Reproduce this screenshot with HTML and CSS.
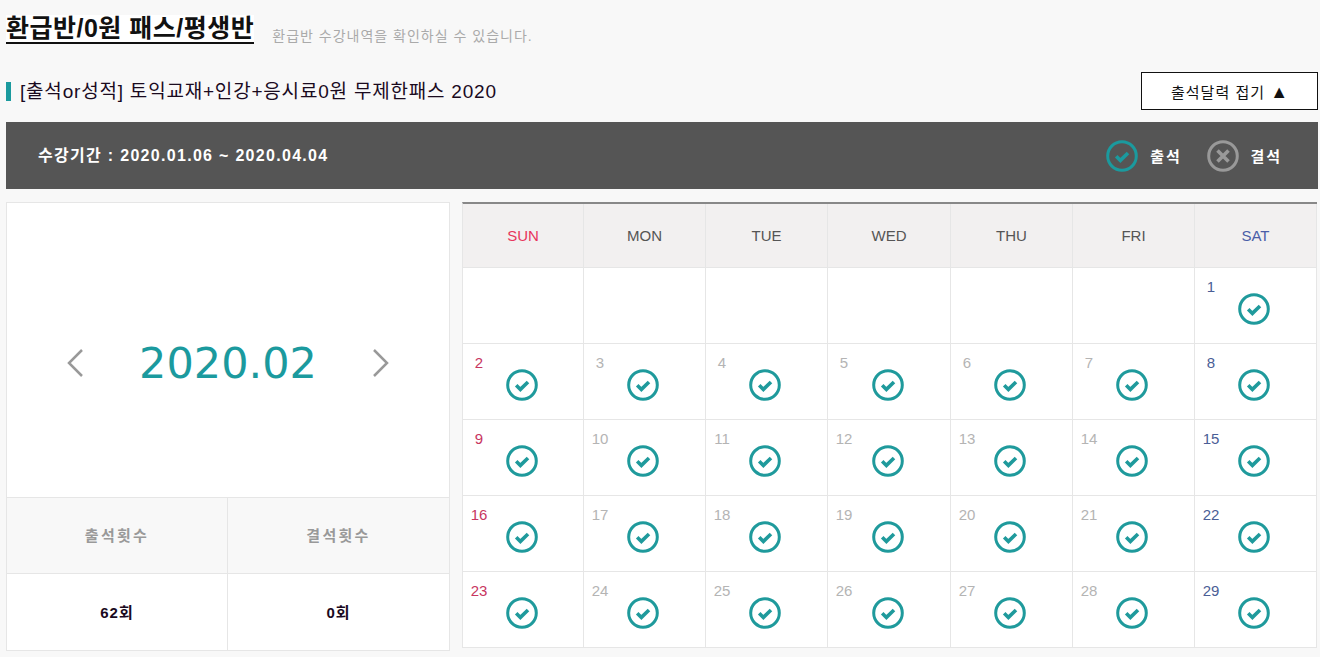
FILE: index.html
```html
<!DOCTYPE html>
<html lang="ko">
<head>
    <meta charset="UTF-8">
    <meta name="viewport" content="width=device-width, initial-scale=1.0">
    <title>환급반/0원 패스/평생반</title>
    <link rel="stylesheet" href="styles.css">
</head>
<body>
    <svg class="icon-defs" width="0" height="0">
        <symbol id="check" viewBox="0 0 32 32">
            <circle cx="16" cy="16" r="14.3" fill="none" stroke="currentColor" stroke-width="3"/>
            <path d="M10.2 16.2l4.2 4.2 7.6-7.4" fill="none" stroke="currentColor" stroke-width="3.6"/>
        </symbol>
        <symbol id="cross" viewBox="0 0 32 32">
            <circle cx="16" cy="16" r="14.3" fill="none" stroke="currentColor" stroke-width="3"/>
            <path d="M10.5 10.5l11 11M21.5 10.5l-11 11" fill="none" stroke="currentColor" stroke-width="3.6"/>
        </symbol>
    </svg>

    <div class="page-head">
        <h2>환급반/0원 패스/평생반</h2>
        <span class="page-desc">환급반 수강내역을 확인하실 수 있습니다.</span>
    </div>

    <div class="course-head">
        <h3>[출석or성적] 토익교재+인강+응시료0원 무제한패스 2020</h3>
        <button type="button" class="toggle-btn">출석달력 접기 <span class="caret">▲</span></button>
    </div>

    <div class="period-bar">
        <span>수강기간 : 2020.01.06 ~ 2020.04.04</span>
        <ul class="legend">
            <li><svg class="legend-icon teal"><use href="#check"/></svg>출석</li>
            <li><svg class="legend-icon gray"><use href="#cross"/></svg>결석</li>
        </ul>
    </div>

    <div class="attend-wrap">
        <div class="month-panel">
            <div class="month-nav">
                <svg class="arrow" viewBox="0 0 18 30"><path d="M16 2L3 15l13 13"/></svg>
                <span class="month">2020.02</span>
                <svg class="arrow" viewBox="0 0 18 30"><path d="M2 2l13 13L2 28"/></svg>
            </div>
            <div class="stats">
                <div class="stat-label">출석횟수</div>
                <div class="stat-label">결석횟수</div>
                <div class="stat-value">62회</div>
                <div class="stat-value">0회</div>
            </div>
        </div>

        <div class="calendar">
            <div class="dow sun">SUN</div>
            <div class="dow">MON</div>
            <div class="dow">TUE</div>
            <div class="dow">WED</div>
            <div class="dow">THU</div>
            <div class="dow">FRI</div>
            <div class="dow sat">SAT</div>

            <div class="day"></div>
            <div class="day"></div>
            <div class="day"></div>
            <div class="day"></div>
            <div class="day"></div>
            <div class="day"></div>
            <div class="day sat"><span class="num">1</span><svg class="mark"><use href="#check"/></svg></div>

            <div class="day sun"><span class="num">2</span><svg class="mark"><use href="#check"/></svg></div>
            <div class="day"><span class="num">3</span><svg class="mark"><use href="#check"/></svg></div>
            <div class="day"><span class="num">4</span><svg class="mark"><use href="#check"/></svg></div>
            <div class="day"><span class="num">5</span><svg class="mark"><use href="#check"/></svg></div>
            <div class="day"><span class="num">6</span><svg class="mark"><use href="#check"/></svg></div>
            <div class="day"><span class="num">7</span><svg class="mark"><use href="#check"/></svg></div>
            <div class="day sat"><span class="num">8</span><svg class="mark"><use href="#check"/></svg></div>

            <div class="day sun"><span class="num">9</span><svg class="mark"><use href="#check"/></svg></div>
            <div class="day"><span class="num">10</span><svg class="mark"><use href="#check"/></svg></div>
            <div class="day"><span class="num">11</span><svg class="mark"><use href="#check"/></svg></div>
            <div class="day"><span class="num">12</span><svg class="mark"><use href="#check"/></svg></div>
            <div class="day"><span class="num">13</span><svg class="mark"><use href="#check"/></svg></div>
            <div class="day"><span class="num">14</span><svg class="mark"><use href="#check"/></svg></div>
            <div class="day sat"><span class="num">15</span><svg class="mark"><use href="#check"/></svg></div>

            <div class="day sun"><span class="num">16</span><svg class="mark"><use href="#check"/></svg></div>
            <div class="day"><span class="num">17</span><svg class="mark"><use href="#check"/></svg></div>
            <div class="day"><span class="num">18</span><svg class="mark"><use href="#check"/></svg></div>
            <div class="day"><span class="num">19</span><svg class="mark"><use href="#check"/></svg></div>
            <div class="day"><span class="num">20</span><svg class="mark"><use href="#check"/></svg></div>
            <div class="day"><span class="num">21</span><svg class="mark"><use href="#check"/></svg></div>
            <div class="day sat"><span class="num">22</span><svg class="mark"><use href="#check"/></svg></div>

            <div class="day sun"><span class="num">23</span><svg class="mark"><use href="#check"/></svg></div>
            <div class="day"><span class="num">24</span><svg class="mark"><use href="#check"/></svg></div>
            <div class="day"><span class="num">25</span><svg class="mark"><use href="#check"/></svg></div>
            <div class="day"><span class="num">26</span><svg class="mark"><use href="#check"/></svg></div>
            <div class="day"><span class="num">27</span><svg class="mark"><use href="#check"/></svg></div>
            <div class="day"><span class="num">28</span><svg class="mark"><use href="#check"/></svg></div>
            <div class="day sat"><span class="num">29</span><svg class="mark"><use href="#check"/></svg></div>
        </div>
    </div>
</body>
</html>
```

FILE: styles.css
```css
html, body {
    height: 657px;
    overflow: hidden;
}
body {
    font-family: "Liberation Sans", "Noto Sans CJK KR", sans-serif;
    background-color: #f8f8f8;
    color: #1a0a1e;
    margin: 0;
    padding: 15px 2px 0 6px;
}
.icon-defs {
    display: block;
    height: 0;
}

/* page heading */
.page-head {
    display: flex;
    align-items: flex-end;
    height: 29px;
}
h2 {
    margin: 0;
    height: 27px;
    font-size: 25px;
    line-height: 26px;
    font-weight: 700;
    letter-spacing: 0.5px;
    color: #111;
    background: #fff;
    border-bottom: 2px solid #111;
}
.page-desc {
    margin-left: 18px;
    font-size: 14px;
    line-height: 15px;
    letter-spacing: 1px;
    color: #aaa;
}

/* course title + toggle */
.course-head {
    display: flex;
    justify-content: space-between;
    align-items: center;
    height: 38px;
    margin-top: 28px;
}
h3 {
    margin: 0;
    padding-left: 9px;
    border-left: 5px solid #1b9a9e;
    font-size: 19px;
    line-height: 19px;
    font-weight: 400;
    letter-spacing: 0.8px;
}
.toggle-btn {
    width: 177px;
    height: 38px;
    padding: 0;
    background: #fff;
    border: 1px solid #111;
    font-family: inherit;
    font-size: 15px;
    letter-spacing: 1px;
    color: #111;
}
.caret {
    font-size: 18px;
    line-height: 14px;
    letter-spacing: 0;
}

/* dark period bar */
.period-bar {
    display: flex;
    justify-content: space-between;
    align-items: center;
    box-sizing: border-box;
    height: 67px;
    margin-top: 12px;
    padding: 0 36px 3px 32px;
    background-color: #555;
    color: #fff;
    font-size: 16px;
    font-weight: 700;
    letter-spacing: 1.3px;
}
.legend {
    display: flex;
    gap: 25px;
    margin: 3px 0 0;
    padding: 0;
    list-style: none;
    font-size: 15px;
    letter-spacing: 1.9px;
}
.legend li {
    display: flex;
    align-items: center;
    gap: 12px;
}
.legend-icon {
    width: 32px;
    height: 32px;
}
.teal { color: #1b9a9e; }
.gray { color: #999; }

/* attendance area */
.attend-wrap {
    display: flex;
    align-items: flex-start;
    gap: 12px;
    margin-top: 13px;
}
.month-panel {
    width: 444px;
    height: 449px;
    box-sizing: border-box;
    background: #fff;
    border: 1px solid #e6e6e6;
    display: flex;
    flex-direction: column;
}
.month-nav {
    flex: 1;
    display: flex;
    justify-content: center;
    align-items: center;
    gap: 55px;
    padding-top: 26px;
}
.month {
    font-family: "DejaVu Sans", sans-serif;
    font-size: 43px;
    color: #1b9a9e;
}
.arrow {
    width: 18px;
    height: 30px;
    fill: none;
    stroke: #999;
    stroke-width: 2.5;
}
.stats {
    display: grid;
    grid-template-columns: 221px 1fr;
    grid-template-rows: 76px 77px;
    text-align: center;
}
.stat-label, .stat-value {
    display: flex;
    justify-content: center;
    align-items: center;
    padding-bottom: 2px;
    box-sizing: border-box;
    font-size: 15px;
    border-top: 1px solid #e6e6e6;
}
.stat-label {
    background: #f8f8f8;
    color: #999;
    font-weight: 700;
    letter-spacing: 2.3px;
}
.stat-value {
    font-weight: 700;
    letter-spacing: 1px;
}
.stat-label:nth-child(odd), .stat-value:nth-child(odd) {
    border-right: 1px solid #e6e6e6;
}

/* calendar */
.calendar {
    width: 855px;
    box-sizing: border-box;
    display: grid;
    grid-template-columns: 121px 122px 122px 123px 122px 122px 1fr;
    grid-template-rows: 64px repeat(5, 76px);
    background: #fff;
    border-top: 2px solid #888;
    border-left: 1px solid #e6e6e6;
}
.dow {
    display: flex;
    justify-content: center;
    align-items: center;
    background: #f2f0f0;
    font-size: 15px;
    color: #555;
    border-right: 1px solid #e6e6e6;
    border-bottom: 1px solid #e6e6e6;
}
.dow.sun { color: #e8355c; }
.dow.sat { color: #4a5ea8; }
.day {
    display: flex;
    flex-direction: column;
    align-items: center;
    padding-top: 12px;
    box-sizing: border-box;
    border-right: 1px solid #e6e6e6;
    border-bottom: 1px solid #e6e6e6;
}
.num {
    align-self: flex-start;
    width: 32px;
    height: 13px;
    font-size: 15px;
    line-height: 13px;
    text-align: center;
    color: #b4b4b4;
}
.day.sun .num { color: #c8365f; }
.day.sat .num { color: #4a5e96; }
.mark {
    width: 32px;
    height: 32px;
    margin-right: 3px;
    color: #1f9a9c;
}
```
